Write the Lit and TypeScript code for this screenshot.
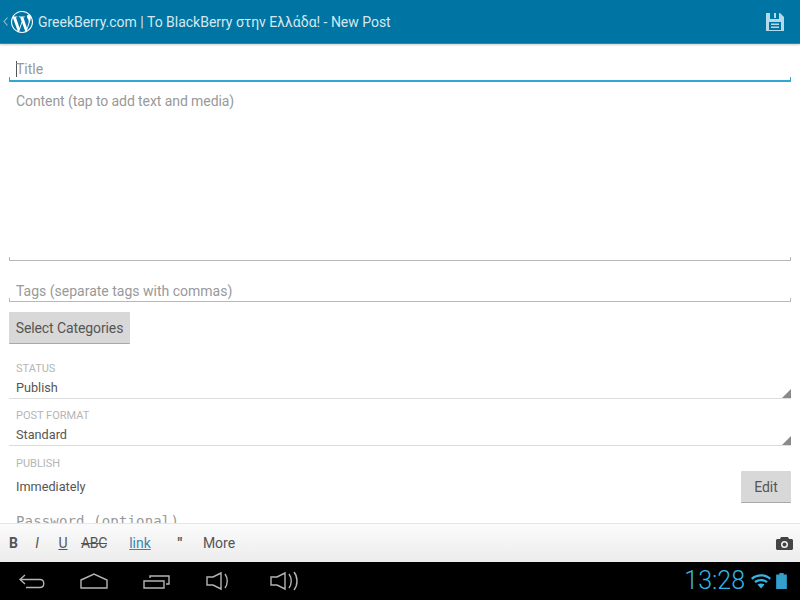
import { LitElement, html, css } from "lit";
import { customElement } from "lit/decorators.js";

@customElement("app-root")
export class AppRoot extends LitElement {
  static styles = css`
    :host { display: flex; flex-direction: column; width: 800px; height: 600px; overflow: hidden; background: #fff; font-family: Roboto, sans-serif; color: #444; }
    .bar { flex: 0 0 44px; box-sizing: border-box; height: 44px; background: #0074a2; border-bottom: 1px solid #4a7f93; display: flex; align-items: center; color: #d5e8f0; box-shadow: 0 1px 2px rgba(0,0,0,.2); position: relative; }
    .chev { width: 5px; height: 9px; margin-left: 3px; flex: none; }
    .logo { width: 22px; height: 22px; margin-left: 3px; flex: none; }
    .bar-title { margin-left: 5px; font-size: 14px; flex: 1; white-space: nowrap; letter-spacing: -0.02px; }
    .save { width: 18px; height: 18px; margin-right: 16px; flex: none; }
    .main { flex: 1; min-height: 0; overflow: hidden; padding: 0 9px; display: flex; flex-direction: column; }
    .main > * { flex: none; }
    .field { position: relative; box-sizing: border-box; border-bottom: 1px solid #b8b8b8; padding: 0 7px; color: #999; font-size: 14px; line-height: 20px; }
    .field::before, .field::after { content: ""; position: absolute; bottom: 0; width: 1px; height: 3px; background: #b8b8b8; }
    .field::before { left: 0; }
    .field::after { right: 0; }
    .title { height: 38px; padding-top: 15px; border-bottom: 2px solid #33a7d4; display: flex; }
    .title::before, .title::after { background: #33a7d4; }
    .caret { width: 1px; height: 16px; margin-top: 2px; background: #555; margin-right: -1px; flex: none; }
    .content { height: 179px; padding-top: 9px; letter-spacing: -0.08px; }
    .tags { height: 41px; padding-top: 20px; }
    .btn { background: #d8d8d8; border-bottom: 1px solid #a8a8a8; box-sizing: border-box; color: #555; font-size: 14px; display: flex; align-items: center; justify-content: center; border-radius: 1px; }
    .cat { width: 121px; height: 32px; margin-top: 10px; letter-spacing: -0.1px; }
    .lbl { font-size: 11px; line-height: 13px; color: #b5b5b5; padding-left: 7px; text-transform: uppercase; }
    .val { font-size: 12.7px; line-height: 16px; color: #555; padding-left: 7px; }
    .sel { position: relative; border-bottom: 1px solid #dcdcdc; padding-bottom: 2px; }
    .sel .val { margin-top: 5px; }
    .sel::after { content: ""; position: absolute; right: 0; bottom: 0; width: 0; height: 0; border-style: solid; border-width: 0 0 9px 9px; border-color: transparent transparent #8a8a8a transparent; }
    .s1 { margin-top: 18px; }
    .s2 { margin-top: 10px; }
    .pub-l { margin-top: 11px; }
    .pub { display: flex; align-items: center; justify-content: space-between; margin-top: 1px; }
    .edit { width: 50px; height: 32px; }
    .pw { font-family: "DejaVu Sans Mono", monospace; font-size: 14px; letter-spacing: 0.15px; color: #999; padding-left: 7px; margin-top: 9px; line-height: 18px; white-space: nowrap; }
    .tools { flex: 0 0 39px; box-sizing: border-box; height: 39px; border-top: 1px solid #e6e6e6; background: linear-gradient(#fbfbfb, #ececec); display: flex; align-items: center; font-size: 13px; color: #555; }
    .t { text-align: center; flex: none; }
    .tb { width: 27px; font-weight: 700; font-size: 14px; }
    .ti { width: 20px; font-style: italic; font-size: 14px; }
    .tu { width: 32px; text-decoration: underline; font-size: 14px; }
    .ts { width: 30px; text-decoration: line-through; font-size: 14px; letter-spacing: -0.3px; }
    .tl { width: 62px; text-decoration: underline; color: #3a87ad; font-size: 14px; }
    .tq { width: 18px; font-weight: 700; font-size: 15px; }
    .tm { width: 60px; font-size: 14px; }
    .cam { margin-left: auto; margin-right: 7px; width: 17px; height: 15px; flex: none; }
    .nav { flex: 0 0 38px; height: 38px; background: #000; display: flex; align-items: center; }
    .ni { fill: none; stroke: #b4b4b4; stroke-width: 1.4; flex: none; }
    .n1 { margin-left: 18px; width: 28px; height: 18px; }
    .n2 { margin-left: 33px; width: 30px; height: 18px; }
    .n3 { margin-left: 34px; width: 30px; height: 18px; }
    .n4 { margin-left: 33px; width: 26px; height: 20px; }
    .n5 { margin-left: 38px; width: 30px; height: 20px; }
    .time { margin-left: auto; font-size: 25px; font-weight: 300; color: #33b5e5; line-height: 38px; }
    .wifi { margin-left: 6px; width: 20px; height: 16px; flex: none; }
    .batt { margin-left: 5px; margin-right: 13px; width: 11px; height: 16px; flex: none; }
  `;

  render() {
    return html`
      <div class="bar">
        <svg class="chev" viewBox="0 0 5 9" fill="none" stroke="#8fc4d9" stroke-width="1.1"><path d="M4.500.5 1 4.500l3.500 4"/></svg>
        <svg class="logo" viewBox="0 0 24 24" fill="#fff"><path d="M21.469 6.825c.84 1.537 1.318 3.3 1.318 5.175 0 3.979-2.156 7.456-5.363 9.325l3.295-9.527c.615-1.54.82-2.771.82-3.864 0-.405-.026-.78-.07-1.11m-7.981.105c.647-.03 1.232-.105 1.232-.105.582-.075.514-.93-.067-.899 0 0-1.755.135-2.88.135-1.064 0-2.85-.15-2.85-.15-.585-.03-.661.855-.075.885 0 0 .54.061 1.125.09l1.68 4.605-2.37 7.08L5.354 6.9c.649-.03 1.234-.1 1.234-.1.585-.075.516-.93-.065-.896 0 0-1.746.138-2.874.138-.2 0-.438-.008-.69-.015C4.911 3.15 8.235 1.215 12 1.215c2.809 0 5.365 1.072 7.286 2.833-.046-.003-.091-.009-.141-.009-1.06 0-1.812.923-1.812 1.914 0 .89.513 1.643 1.06 2.531.411.72.89 1.643.89 2.977 0 .915-.354 1.994-.821 3.479l-1.075 3.585-3.9-11.61.001.014zM12 22.784c-1.059 0-2.081-.153-3.048-.437l3.237-9.406 3.315 9.087c.024.053.05.101.078.149-1.12.393-2.325.609-3.582.609M1.211 12c0-1.564.336-3.05.935-4.39L7.29 21.709C3.694 19.96 1.212 16.271 1.211 12M12 0C5.385 0 0 5.385 0 12s5.385 12 12 12 12-5.385 12-12S18.615 0 12 0"/></svg>
        <div class="bar-title">GreekBerry.com | Το BlackBerry στην Ελλάδα! - New Post</div>
        <svg class="save" viewBox="0 0 18 18"><path fill="#b5d9e8" fill-rule="evenodd" d="M0 0h14l4 4v14H0zM4 0v6h9V0h-3v5H8V0zM3 9v8h12V9z"/><path fill="#b5d9e8" d="M5 10.500h8V12H5zM5 13.500h8V15H5z"/></svg>
      </div>
      <div class="main">
        <div class="field title"><span class="caret"></span><span>Title</span></div>
        <div class="field content">Content (tap to add text and media)</div>
        <div class="field tags">Tags (separate tags with commas)</div>
        <div class="btn cat">Select Categories</div>
        <div class="sel s1"><div class="lbl">Status</div><div class="val">Publish</div></div>
        <div class="sel s2"><div class="lbl">Post Format</div><div class="val">Standard</div></div>
        <div class="lbl pub-l">Publish</div>
        <div class="pub"><div class="val">Immediately</div><div class="btn edit">Edit</div></div>
        <div class="pw">Password (optional)</div>
      </div>
      <div class="tools">
        <span class="t tb">B</span><span class="t ti">I</span><span class="t tu">U</span><span class="t ts">ABC</span><span class="t tl">link</span><span class="t tq">"</span><span class="t tm">More</span>
        <svg class="cam" viewBox="0 0 17 15"><path fill="#444" fill-rule="evenodd" d="M5 1h7l1 2h3l1 1v9l-1 1H1l-1-1V4l1-1h3zM8.500 5a3.500 3.500 0 1 0 0 7 3.500 3.500 0 0 0 0-7z"/><circle cx="8.500" cy="8.500" r="2" fill="#444"/></svg>
      </div>
      <div class="nav">
        <svg class="ni n1" viewBox="0 0 28 18"><path d="M7 3 2 7.500 7 12M2 7.500h20c5 0 5 8 0 8H8"/></svg>
        <svg class="ni n2" viewBox="0 0 30 18"><path d="M2 8 15 2l13 6v8H2z"/></svg>
        <svg class="ni n3" viewBox="0 0 30 18"><path d="M1 9h20v7H1zM7 6V4h19v8h-3"/></svg>
        <svg class="ni n4" viewBox="0 0 26 20"><path d="M1 6h6l8-4v16l-8-4H1zM19 3c3 4 3 10 0 14"/></svg>
        <svg class="ni n5" viewBox="0 0 30 20"><path d="M1 6h6l8-4v16l-8-4H1zM19 3c3 4 3 10 0 14M24 1c4 5 4 13 0 18"/></svg>
        <span class="time">13:28</span>
        <svg class="wifi" viewBox="0 0 20 15"><path fill="#33b5e5" d="M0 4.500C5.500-.5 14.500-.5 20 4.500l-1.500 1.700C13.500 2 6.500 2 1.500 6.200zM3.200 7.800c3.800-3.200 9.800-3.200 13.600 0l-1.500 1.700c-3-2.400-7.600-2.400-10.600 0zM6.500 11c2-1.500 5-1.500 7 0L10 15z"/></svg>
        <svg class="batt" viewBox="0 0 10 15"><path fill="#33a0cc" d="M3 0h4v1.500h3V15H0V1.500h3z"/></svg>
      </div>
    `;
  }
}
